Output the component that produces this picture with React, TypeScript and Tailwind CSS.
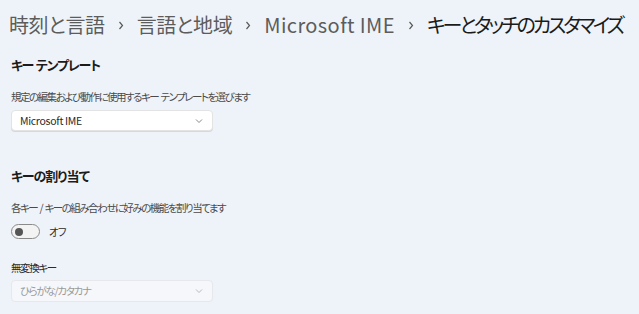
import React from 'react';

const font = "font-['Noto_Sans_CJK_JP','Noto_Sans',sans-serif] [font-feature-settings:'palt']";

function Chevron() {
  return (
    <svg width="6" height="9" viewBox="0 0 6 9" className="mx-[13px] shrink-0">
      <path d="M1.5 1 L4.5 4.5 L1.5 8" fill="none" stroke="#5a5a5a" strokeWidth="1.2" />
    </svg>
  );
}

function DownChevron({ color }: { color: string }) {
  return (
    <svg width="8" height="6" viewBox="0 0 8 6">
      <path d="M1 1.5 L4 4.5 L7 1.5" fill="none" stroke={color} strokeWidth="0.9" />
    </svg>
  );
}

export default function App() {
  return (
    <div className={`w-[639px] h-[314px] overflow-hidden bg-[#eef3f9] text-[#1b1b1b] ${font}`}>
      <div className="flex items-center pl-[9px] pt-[11px] h-[39px] text-[20px] leading-[28px] whitespace-nowrap">
        <span className="text-[#5c5c5c] tracking-[-0.4px]">時刻と言語</span>
        <Chevron />
        <span className="text-[#5c5c5c] tracking-[-0.4px]">言語と地域</span>
        <Chevron />
        <span className="text-[#5c5c5c] tracking-[0.4px]">Microsoft IME</span>
        <Chevron />
        <span className="text-[#1b1b1b] tracking-[-3px]">キーとタッチのカスタマイズ</span>
      </div>

      <div className="px-[11px] flex flex-col">
        <h2 className="mt-[16px] text-[13px] leading-[20px] font-semibold tracking-[-1.2px] [word-spacing:1px]">キー テンプレート</h2>
        <p className="mt-[14px] text-[10.5px] leading-[16px] text-[#4a4a4a] tracking-[-1.5px] [word-spacing:1.5px]">規定の編集および動作に使用するキー テンプレートを選びます</p>
        <div className="mt-[5px] w-[202px] h-[21px] bg-white rounded-[4px] border border-[#e3e3e3] shadow-[0_1px_0_#d8d8d8] flex items-center justify-between pl-[8px] pr-[9px]">
          <span className="text-[10.5px] text-[#2a2a2a] tracking-[-0.3px]">Microsoft IME</span>
          <DownChevron color="#7a7a7a" />
        </div>

        <h2 className="mt-[35px] text-[13px] leading-[20px] font-semibold tracking-[-1px]">キーの割り当て</h2>
        <p className="mt-[14px] text-[10.5px] leading-[16px] text-[#4a4a4a] tracking-[-1.5px] [word-spacing:1.5px]">各キー / キーの組み合わせに好みの機能を割り当てます</p>
        <div className="mt-[8px] flex items-center h-[15px]">
          <div className="w-[29px] h-[15px] rounded-full border border-[#8a8a8a] bg-[#f3f3f3] flex items-center pl-[3px]">
            <div className="w-[8px] h-[8px] rounded-full bg-[#555]" />
          </div>
          <span className="ml-[9px] text-[10.5px] text-[#2a2a2a] tracking-[-1px]">オフ</span>
        </div>

        <p className="mt-[21px] text-[10.5px] leading-[16px] text-[#2a2a2a] tracking-[-1.4px]">無変換キー</p>
        <div className="mt-[4px] w-[202px] h-[22px] bg-[#f5f7fa] rounded-[4px] border border-[#e6e8eb] flex items-center justify-between pl-[8px] pr-[9px]">
          <span className="text-[10.5px] text-[#9a9a9a] tracking-[-1.3px]">ひらがな/カタカナ</span>
          <DownChevron color="#b0b0b0" />
        </div>
      </div>
    </div>
  );
}
